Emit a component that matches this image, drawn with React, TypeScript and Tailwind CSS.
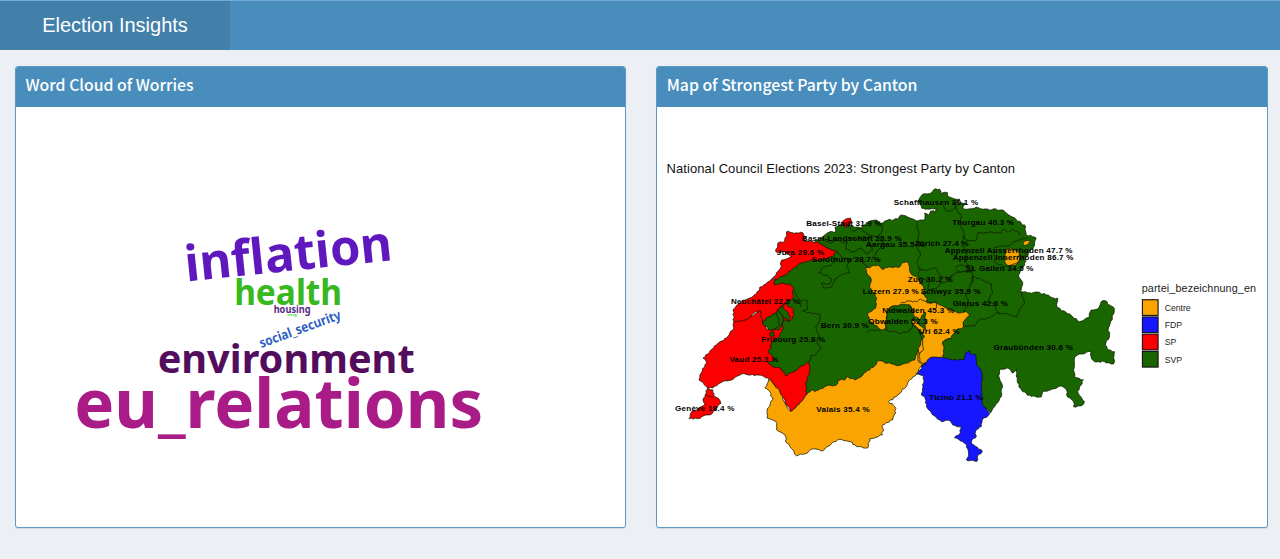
import React from "react";

type Word = { text: string; x: number; y: number; size: number; width: number; color: string; rotate?: number };

const words: Word[] = [
  { text: "inflation", x: 186.5, y: 281.5, size: 49.5, width: 208, color: "#5f18bd", rotate: -5.9 },
  { text: "health", x: 234, y: 305, size: 35, width: 108, color: "#38b81f" },
  { text: "housing", x: 273.5, y: 313, size: 10, width: 37, color: "#5a2a86" },
  { text: "energy", x: 287, y: 316.3, size: 3.6, width: 10, color: "#3fe02a" },
  { text: "social_security", x: 261, y: 348, size: 13.5, width: 86, color: "#2f5fc4", rotate: -20 },
  { text: "environment", x: 157.5, y: 372.7, size: 40, width: 257, color: "#520d5c" },
  { text: "eu_relations", x: 74, y: 428, size: 68.5, width: 409, color: "#a91c87" },
];

const GREEN = "#196600";
const RED = "#fb0000";
const ORANGE = "#f9a400";
const BLUE = "#1717ff";

type Region = { fill: string; pts: string; calm?: boolean };

const regions: Region[] = [
  {
    fill: GREEN,
    pts: "815,242 822.7,237.3 830,231.7 836,232 835.3,227 843,224 853,226 861.7,228 866.7,222.7 875,220 883,223 888,220 898,219 900.7,215 908,217 917,221 925,220 925,213 929,215 931,211 936,212 937,208 930,209 922,208 919,200 923,194 931.7,192.7 934,189.5 940,189 941,193 948,192.7 949,196.7 953,198 960,199 957,204 966,203 963,208 968,209 976.7,207 990,210 996.7,209 1005,211 1013,217 1021.7,223 1026,226.7 1026.7,235 1035,237 1036.7,238 1035,245 1030,251.7 1026.7,257 1025,265 1019,275 1023,282 1021.7,290 1020,292 1030,292.7 1038,292 1046.7,295 1054,298 1058,298 1057,305 1061.7,310.7 1070,314 1080,321.7 1090,317 1091.7,310 1098,309 1101.7,301.7 1106,300.7 1110,305 1114.7,308 1112.7,320 1109,328 1110,335 1106,345 1109,350 1115,351.7 1114,364 1105,361.7 1095,361.7 1091.7,357 1091.7,351.7 1080,354 1075,358 1074,370 1075,377 1084,380 1081.7,385 1078,391.7 1085,401.7 1081.7,406 1074,406.7 1074,401.7 1068,397 1067,390 1061.7,386 1053,389 1043,391.7 1041.7,397 1031.7,396.7 1023,391.7 1018,383 1017,369 1012.7,373 1008,368 1000.7,369 999,376 1002.7,385 1001.7,396.7 995,406.7 991,413 975,400 960,370 925,366 915,366 898,368 870,376 840,388 811,394 795,392 765,360 770,340 770,300 775,279 800,255",
  },
  {
    fill: ORANGE,
    pts: "769,379 780,390 785,403 790.7,411 803,398 811.7,390 815,391.7 826.7,386 836.7,385 838,380.7 846,379 847,376 855,380 870,370 879,360.7 898,365.7 915,360 918,350 923,352 930,358 919,369 917,374 910,380 906.7,386.7 898,395 889,401.7 895,406.7 896,413 893,420 883,425 882.7,435 870,439 868,448 856.7,446.7 850,441.7 838,440 828,446.7 823,451 813,449 805,454 796.7,456 793,450 786.7,443 785,435 776.7,430 776,421.7 767,418 768,408 773,400 770,391.7 765,388",
  },
  {
    fill: ORANGE,
    pts: "866,268 878,265 882,269 890,266.7 900,267 902.7,262.7 908,261.7 910.7,272.7 916.7,276.7 920.7,283 925,290 921.7,293 928,298 927,302 936.7,303 946.7,308 960,313 966.7,311.7 970.7,315 964,321.7 963,328 956.7,330 951.7,338 943,341.7 944,358 930.7,358 928,363 923,365 919,362 918,350 921,343 925,336 919,329 912,322 912,316 915,312 910,305 900,305 891,307 887,313 886,328 881.7,330 870,321.7 868,313 876,308 877,298 870,288 871.7,280 868,275",
  },
  {
    fill: BLUE,
    pts: "924,365 930.7,357.7 945,358 953,360 965,360 966,353 970.7,350.7 971.7,355 976.7,355 977,365 981.7,370 982.7,380 981.7,390 983,405 990,414 982.7,420 981.7,426.7 976.7,430 976,438 971.7,441.7 974,445 982.7,451.7 978,456 977,461.7 966.7,460 969,454 967,445 963,441.7 955,438 960.7,433 961.7,427 953,425 950,420.7 941.7,421.7 933,415 926.7,406.7 925,396.7 921.7,395 924,383 924,376 916.7,374 920,370",
  },
  {
    fill: RED,
    pts: "734,321.7 745,320 760,310 763,322 768,330 779,330 784,320 779,310 785,303 794,310 793,317 789,322 784,320 782,332 778,338 773,341 770,346 771.7,348 768,352 775,359 768,363 773,367 781.7,369 786,376 798,369 809,362 810,370 806,383 806.7,393 801.7,401.7 790.7,411.5 783,396.7 775,385 768,378 756.7,375 741.7,374 731.7,380 723,381.7 713,388 708,388 699,380 700,375 706.7,363 703,358 716.7,345 726.7,338 734,328",
  },
  {
    fill: RED,
    pts: "773,278 775,281 775,285 783,283 790,284 794,288 793,298 783,305 776.7,311.7 762.7,323 760,310 745,320 734,321.7 733,310 741.7,301.7 750,298 756.7,294 760,287 766,284",
  },
  {
    fill: RED,
    pts: "773,277.7 780.7,268 781.7,260 791.7,257 785,251.7 776,251.7 778,243 785,241.7 786.7,231.7 796.7,232.7 803,232.7 806,236.7 805,241.7 816.7,241.7 828,248 837,251.7 831.7,256.7 820,260 810,260.7 801.7,262.7 796.7,267 785,275 780,276.7 776,280",
  },
  {
    fill: RED,
    pts: "708,388 713,390 714,396 720,400.5 721,403.5 715,410 710,415 706.7,415 700,418.5 689,419 691.7,411.7 698,409 705,404 703,400 705,396.7 706,391",
  },
  { fill: RED, pts: "842,223 846,219 850.7,218 852,223 845,227.3" },
  { fill: ORANGE, pts: "1006,250 1011,248 1019,252 1020,260 1016,265 1009,266 1005,261" },
  { fill: ORANGE, pts: "1023,243 1026,240.5 1031,240 1029,244 1025,245.5", calm: true },
  { fill: GREEN, pts: "762.7,323 768,317 776.7,312.3 778,318 779,326.7 770,330" },
  { fill: GREEN, pts: "777,310 783,306.7 786,311 790.7,316.7 789,321.7 783,316" },
  { fill: GREEN, pts: "770,333 774,332 775,336 771,337" },
  { fill: GREEN, pts: "887,313 891.7,307 900,305 910,305 912,311 915,316.7 911.7,321.7 912.7,328 908,332 900,333.3 886,330" },
  { fill: GREEN, pts: "913,318 917,317 920,320 925.5,312 926,320 926.5,330 921,326 917,322" },
];

const borders: string[] = [
  "917,221 919,235 916,245 921,254 917,262 921,270 918,274",
  "918,269 928,270 936,268 941,276 949,278 956,273 965,271 973,272",
  "955,203 957,210 962,216 960,224 965,234 962,243 967,254 966,262 972,272 974,280 970,285",
  "944,205 947,211 953,210 956,206 953,202",
  "967,240 976,241 978,233 990,232 1001,233 1004,229 1008,232 1013,229 1019,232 1021,235",
  "967,240 963,236",
  "956,267 962,265 973,266 974,271 961,272 956,269",
  "995,262 995,247 1007,246 1019,240 1028,237",
  "995,262 1005,267 1018,263 1027,254",
  "973,276 982,280 992,284 993,293 989,300 995,305 1000,315",
  "973,276 970,288 966,295 970,304 963,313",
  "998,313 1008,314 1017,317 1021,308 1025,303 1021,292",
  "964,326 975,326 981,319 990,318 998,312",
  "918,275 930,282 928,289 937,289 940,284 949,281 952,275",
  "901,303 909,301 917,302 921,299 928,303 936,302 937,308",
  "822,238 830,243 838,240 845,243 849,237 856,240 865,236 870,242 873,250 867,254 862,248 852,252 846,249 848,241",
  "847,224 853,231 861,228 867,234 878,237 884,243 878,251 873,257 872,262",
  "837,251 842,258 851,259 847,267 850,273 843,274 835,279 832,287 824,288 822,283 830,284 832,279 825,275 819,273 823,268 833,264 837,258",
  "848,263 855,257 863,262 868,268",
  "883,225 882,232 877,237",
  "794,291 800,301 807,300 808,309 803,311 811,313 820,314 820,319 816,327 819,336 817,344 821,348 816,355 811,356 809,362",
  "801,301 801,307",
  "866,332 872,330 881,331",
  "912,323 919,330 922,337 924,349 920,354",
  "919,349 920,361 927,365",
  "945,340 952,339",
  "705,395 713,397",
];

const labels: [string, number, number, number][] = [
  ["Schaffhausen 39.1 %", 894, 205, 84.5],
  ["Basel-Stadt 31.9 %", 806.5, 226, 75.5],
  ["Basel-Landschaft 28.9 %", 802, 241, 100],
  ["Jura 29.6 %", 777, 255, 47.5],
  ["Solothurn 28.7 %", 812, 262, 69],
  ["Aargau 35.5 %", 866, 247, 59],
  ["Zürich 27.4 %", 915, 246.3, 54],
  ["Thurgau 40.3 %", 952.5, 225.2, 62],
  ["Appenzell Ausserrhoden 47.7 %", 945, 253.4, 128],
  ["Appenzell Innerrhoden 86.7 %", 953, 260, 121],
  ["St. Gallen 34.5 %", 966, 271.3, 68],
  ["Zug 30.2 %", 908, 282, 45],
  ["Schwyz 35.9 %", 921, 294, 60],
  ["Luzern 27.9 %", 863, 294, 56],
  ["Glarus 42.6 %", 953, 306, 55.5],
  ["Nidwalden 45.3 %", 882.5, 313, 72],
  ["Obwalden 52.3 %", 868.5, 324, 69.5],
  ["Uri 62.4 %", 919, 334.5, 41],
  ["Bern 30.9 %", 821, 328, 48],
  ["Fribourg 25.8 %", 761.5, 342, 64],
  ["Neuchâtel 22.5 %", 731, 304, 69],
  ["Vaud 25.3 %", 729.5, 362.5, 49],
  ["Genève 18.4 %", 675, 410.7, 59.5],
  ["Valais 35.4 %", 816.5, 412, 53.5],
  ["Ticino 21.1 %", 929.5, 400, 53.5],
  ["Graubünden 30.6 %", 994, 350.5, 79.5],
];

const legend = [
  { name: "Centre", fill: ORANGE },
  { name: "FDP", fill: BLUE },
  { name: "SP", fill: RED },
  { name: "SVP", fill: GREEN },
];

/* Splits each edge into short steps with a small deterministic offset, for a natural border line. */
function roughen(source: string, closed: boolean, amount = 0.75) {
  const pts = source.split(" ").map((p) => p.split(",").map(Number));
  const out: string[] = [];
  const last = closed ? pts.length : pts.length - 1;
  for (let i = 0; i < last; i++) {
    const [ax, ay] = pts[i];
    const [bx, by] = pts[(i + 1) % pts.length];
    const len = Math.hypot(bx - ax, by - ay) || 1;
    const steps = Math.max(1, Math.round(len / 2.2));
    for (let k = 0; k < steps; k++) {
      const t = k / steps;
      const x = ax + (bx - ax) * t;
      const y = ay + (by - ay) * t;
      const wave = Math.sin(x * 12.9 + y * 78.2) * 43758.5;
      const off = k === 0 ? 0 : ((wave - Math.floor(wave)) * 2 - 1) * amount;
      out.push(`${(x - ((by - ay) / len) * off).toFixed(2)},${(y + ((bx - ax) / len) * off).toFixed(2)}`);
    }
  }
  if (!closed) out.push(pts[pts.length - 1].join(","));
  return out.join(" ");
}

function Box({ title, children }: { title: string; children: React.ReactNode }) {
  return (
    <section className="flex h-[462px] min-w-0 flex-1 flex-col overflow-hidden rounded-[3px] border border-[#5c9ac3] bg-white shadow-[0_1px_1px_rgba(0,0,0,0.1)]">
      <h3 className="flex h-10 shrink-0 items-center bg-[#488dbc] pb-[3px] pl-[9.5px] font-['Noto_Sans_CJK_SC',sans-serif] text-[15.8px] leading-none font-medium text-white">
        {title}
      </h3>
      {children}
    </section>
  );
}

function WordCloud() {
  return (
    <svg className="block h-[420px] w-full" viewBox="16 107 609 420" fontFamily="'Noto Sans', sans-serif" fontWeight="700">
      {words.map((w) => (
        <text
          key={w.text}
          x={w.x}
          y={w.y}
          fontSize={w.size}
          fill={w.color}
          textLength={w.width}
          lengthAdjust="spacingAndGlyphs"
          transform={w.rotate ? `rotate(${w.rotate} ${w.x} ${w.y})` : undefined}
        >
          {w.text}
        </text>
      ))}
    </svg>
  );
}

function CantonMap() {
  return (
    <svg className="block h-[420px] w-full" viewBox="657 107 610 420" fontFamily="'Liberation Sans', Arial, sans-serif">
      <text x="666.5" y="173" fontSize="13" fill="#111" textLength="349">
        National Council Elections 2023: Strongest Party by Canton
      </text>
      <g stroke="#101800" strokeWidth="0.75" strokeLinejoin="round">
        {regions.map((r, i) => (
          <polygon key={i} points={roughen(r.pts, true, r.calm ? 0.2 : 0.9)} fill={r.fill} />
        ))}
        {borders.map((b, i) => (
          <polyline key={i} points={roughen(b, false)} fill="none" />
        ))}
      </g>
      <g fontSize="8.1" fontWeight="700" fill="#000">
        {labels.map(([text, x, y, w]) => (
          <text key={text} x={x} y={y} textLength={w}>
            {text}
          </text>
        ))}
      </g>
      <text x="1142.3" y="292" fontSize="10.8" fill="#222" textLength="114.5">
        partei_bezeichnung_en
      </text>
      {legend.map((item, i) => (
        <g key={item.name}>
          <rect x="1143" y={299.7 + i * 17.25} width="15.7" height="15.7" fill={item.fill} stroke="#111" strokeWidth="1.1" />
          <text x="1165.3" y={311 + i * 17.25} fontSize="8.7" fill="#222">
            {item.name}
          </text>
        </g>
      ))}
    </svg>
  );
}

export default function App() {
  return (
    <div className="flex h-[559px] w-full flex-col overflow-hidden bg-[#ecf0f5]">
      <header className="flex h-[50px] shrink-0 border-t border-[#74acd8] bg-[#488dbc]">
        <div className="flex w-[230px] items-center justify-center bg-[#4280aa] pb-px font-['Liberation_Sans',Arial,sans-serif] text-[20px] text-white">
          Election Insights
        </div>
      </header>
      <main className="flex gap-[30px] pt-[15.5px] pr-[12.5px] pl-[15px]">
        <Box title="Word Cloud of Worries">
          <WordCloud />
        </Box>
        <Box title="Map of Strongest Party by Canton">
          <CantonMap />
        </Box>
      </main>
    </div>
  );
}
